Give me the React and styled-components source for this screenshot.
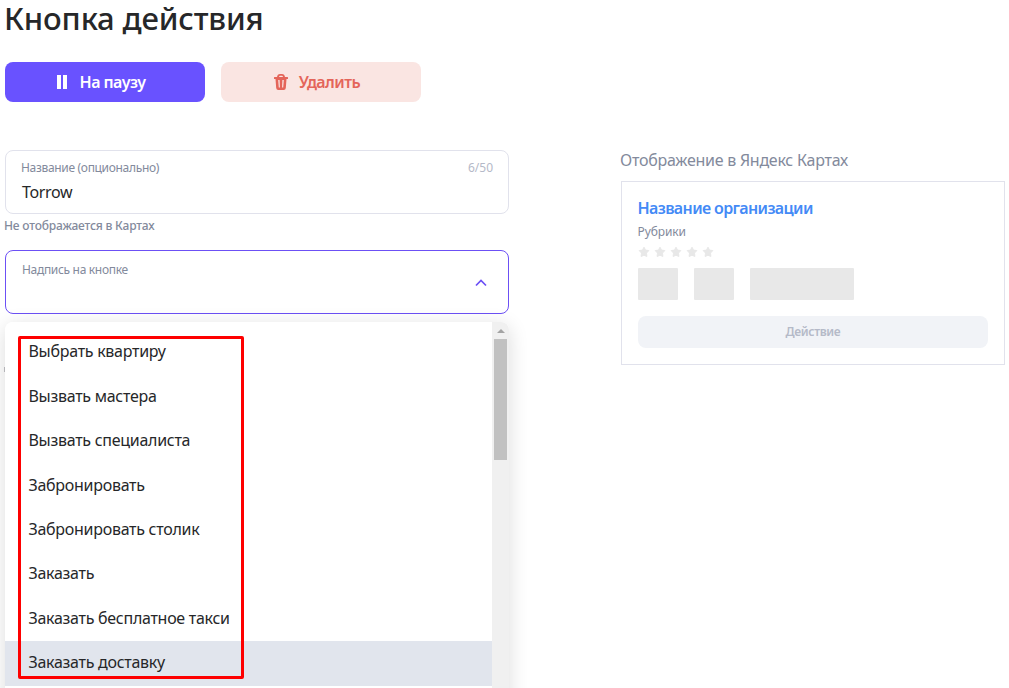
import React from 'react';
import styled, { createGlobalStyle } from 'styled-components';

const Global = createGlobalStyle`
  * { box-sizing: border-box; }
  html, body { margin: 0; height: 100%; overflow: hidden; background: #fff; }
  body { font-family: "Noto Sans", "Open Sans", sans-serif; color: #262729; }
`;

const Page = styled.main`
  position: relative;
  width: 1009px;
  height: 688px;
  overflow: hidden;
  padding: 0 4px 0 5px;
`;

const Title = styled.h1`
  margin: 0 0 0 -1px;
  height: 62px;
  font-size: 31px;
  font-weight: 500;
  line-height: 37px;
  letter-spacing: -0.15px;
  white-space: nowrap;
`;

const Actions = styled.div`
  display: flex;
  gap: 16px;
`;

const Button = styled.button`
  display: flex;
  align-items: center;
  justify-content: center;
  width: 200px;
  height: 40px;
  padding: 0 8px 0 0;
  border: 0;
  border-radius: 8px;
  background: ${(p) => (p.$danger ? '#fae5e2' : '#6952ff')};
  color: ${(p) => (p.$danger ? '#e4655a' : '#fff')};
  gap: ${(p) => (p.$danger ? '11px' : '13px')};
  font: 600 16px/20px "Noto Sans", sans-serif;
  letter-spacing: -0.55px;
`;

const Columns = styled.div`
  display: flex;
  justify-content: space-between;
  margin-top: 48px;
`;

const Form = styled.section`
  width: 504px;
`;

const Field = styled.div`
  display: flex;
  justify-content: space-between;
  height: 64px;
  padding: ${(p) => (p.$open ? '10px 16px 0' : '8px 15px 0')};
  border: 1px solid ${(p) => (p.$open ? '#6c50f5' : '#e1e2ec')};
  border-radius: 8px;
`;

const Label = styled.div`
  font-size: 12px;
  line-height: 17px;
  letter-spacing: -0.32px;
  color: #838a9c;
`;

const Counter = styled(Label)`
  letter-spacing: 0;
  color: #b5b9c8;
`;

const Value = styled.div`
  margin: 6px 0 0 1px;
  font-size: 16px;
  line-height: 20px;
  letter-spacing: -0.35px;
`;

const Hint = styled.div`
  height: 36px;
  margin-left: -1px;
  padding-top: 3px;
  font-size: 12px;
  font-weight: 500;
  line-height: 18px;
  letter-spacing: -0.18px;
  color: #838a9c;
`;

const Chevron = styled.svg`
  display: block;
  margin: 18px 5px 0 0;
`;

const Menu = styled.div`
  display: flex;
  width: 504px;
  height: 420px;
  margin-top: 8px;
  border-radius: 8px;
  overflow: hidden;
  background: #fff;
`;

const MenuShadow = styled.div`
  border-radius: 8px;
  box-shadow: 0 4px 20px rgba(0, 0, 0, 0.14);
`;

const Options = styled.ul`
  flex: 1;
  margin: 0;
  padding: 8.4px 0;
  list-style: none;
`;

const Option = styled.li`
  height: 44.4px;
  padding-left: 23.5px;
  font-size: 16px;
  line-height: 43px;
  letter-spacing: -0.28px;
  white-space: nowrap;
  background: ${(p) => (p.$active ? '#e1e5ed' : 'transparent')};
`;

const Scrollbar = styled.div`
  width: 17px;
  padding: 7px 2px 0;
  background: #f0f0f0;
`;

const Arrow = styled.svg`
  display: block;
  margin: 0 auto 6px;
`;

const Thumb = styled.div`
  height: 121px;
  background: #c1c1c1;
`;

const Preview = styled.aside`
  width: 384px;
`;

const PreviewTitle = styled.div`
  height: 31px;
  margin-left: -1px;
  font-size: 16px;
  line-height: 20px;
  letter-spacing: -0.25px;
  color: #838a9c;
  white-space: nowrap;
`;

const Card = styled.div`
  height: 184px;
  padding: 16px;
  border: 1px solid #e1e2ec;
`;

const OrgName = styled.div`
  margin-left: -0.5px;
  font-size: 16px;
  font-weight: 600;
  line-height: 20px;
  letter-spacing: -0.63px;
  color: #448af6;
`;

const Rubrics = styled.div`
  margin: 5px 0 0 -0.5px;
  font-size: 12px;
  line-height: 17px;
  letter-spacing: -0.1px;
  color: #838a9c;
`;

const Stars = styled.div`
  display: flex;
  gap: 4px;
  height: 12px;
  margin-top: 6px;
`;

const Blocks = styled.div`
  display: flex;
  gap: 16px;
  margin-top: 10px;
`;

const Block = styled.div`
  width: ${(p) => p.$width}px;
  height: 32px;
  border-radius: 1px;
  background: #e8e8e8;
`;

const CardAction = styled.div`
  height: 32px;
  margin-top: 16px;
  border-radius: 8px;
  background: #f1f3f7;
  color: #b5bac8;
  font-size: 12px;
  font-weight: 600;
  line-height: 32px;
  letter-spacing: -0.35px;
  text-align: center;
`;

const Highlight = styled.div`
  position: absolute;
  left: 18px;
  top: 336px;
  width: 226px;
  height: 343px;
  border: 3px solid #fe0000;
  border-radius: 2px;
`;

const CoveredEdge = styled.div`
  position: absolute;
  left: 4px;
  top: 367px;
  width: 1px;
  height: 5px;
  background: #b4b4b8;
`;

const options = [
  'Выбрать квартиру',
  'Вызвать мастера',
  'Вызвать специалиста',
  'Забронировать',
  'Забронировать столик',
  'Заказать',
  'Заказать бесплатное такси',
  'Заказать доставку',
];

export default function App() {
  return (
    <Page>
      <Global />
      <Title><span>Кнопка действия</span></Title>
      <Actions>
        <Button>
          <svg width="10" height="14" viewBox="0 0 10 14" fill="currentColor">
            <path d="M0 0h4v14H0zM6 0h4v14H6z" />
          </svg>
          <span>На паузу</span>
        </Button>
        <Button $danger>
          <svg width="14" height="16" viewBox="0 0 14 16" fill="currentColor">
            <path d="M3 3C3.300 1 4.300 0 6 0h2c1.700 0 2.700 1 3 3h2.500q.5 0 .5.500V5h-1.500l-.7 9q-.2 2-2 2H4.200q-1.800 0-2-2L1.500 5H0V3.500Q0 3 .5 3zM5 3h4Q8.700 1.800 8 1.800H6Q5.300 1.800 5 3z" fillRule="evenodd" />
            <path d="M4.200 6h1.400l.3 7.500H4.800zM8.400 6h1.400l-.6 7.500H8.100z" fill="#fae5e2" />
          </svg>
          <span>Удалить</span>
        </Button>
      </Actions>
      <Columns>
        <Form>
          <Field>
            <div>
              <Label><span>Название (опционально)</span></Label>
              <Value><span>Torrow</span></Value>
            </div>
            <Counter>6/50</Counter>
          </Field>
          <Hint><span>Не отображается в Картах</span></Hint>
          <Field $open>
            <Label><span>Надпись на кнопке</span></Label>
            <Chevron width="12" height="8" viewBox="0 0 12 8" fill="none" stroke="#6c50f5" strokeWidth="1.700">
              <path d="M1 6.500L6 1.500l5 5" />
            </Chevron>
          </Field>
          <MenuShadow>
            <Menu>
              <Options>
                {options.map((text) => (
                  <Option key={text} $active={text === 'Заказать доставку'}>
                    <span>{text}</span>
                  </Option>
                ))}
              </Options>
              <Scrollbar>
                <Arrow width="8" height="4" viewBox="0 0 8 4"><path d="M4 0l4 4H0z" fill="#a3a3a3" /></Arrow>
                <Thumb />
              </Scrollbar>
            </Menu>
          </MenuShadow>
        </Form>
        <Preview>
          <PreviewTitle><span>Отображение в Яндекс Картах</span></PreviewTitle>
          <Card>
            <OrgName><span>Название организации</span></OrgName>
            <Rubrics><span>Рубрики</span></Rubrics>
            <Stars>
              {[0, 1, 2, 3, 4].map((i) => (
                <svg key={i} width="12" height="12" viewBox="0 0 12 12" fill="#e8e8e8" stroke="#e8e8e8" strokeWidth="1" strokeLinejoin="round">
                  <path d="M6 1.200l1.500 2.900 3.300.5-2.300 2.400.4 3.500L6 9.200l-2.900 1.300.4-3.500L1.200 4.600l3.300-.5z" />
                </svg>
              ))}
            </Stars>
            <Blocks><Block $width={40} /><Block $width={40} /><Block $width={104} /></Blocks>
            <CardAction><span>Действие</span></CardAction>
          </Card>
        </Preview>
      </Columns>
      <CoveredEdge />
      <Highlight />
    </Page>
  );
}
